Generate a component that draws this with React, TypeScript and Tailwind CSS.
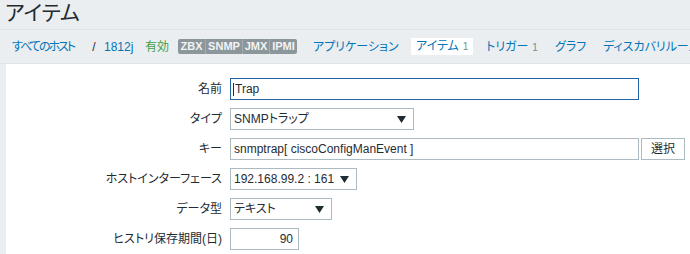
import React from 'react';

const font = "[font-family:'Liberation_Sans','Noto_Sans_CJK_JP',sans-serif] [font-feature-settings:'palt']";

const Arrow = () => (
  <svg width="9" height="7" viewBox="0 0 9 7" className="shrink-0">
    <path d="M0 0h9L4.5 7z" fill="#1f2c33" />
  </svg>
);

const Select = ({ value, width }: { value: string; width: string }) => (
  <div className={`${width} h-[22px] border border-[#acbbc2] bg-white flex items-center justify-between pl-[3px] pr-[7px] text-[#1f2c33]`}>
    <span>{value}</span>
    <Arrow />
  </div>
);

const App = () => {
  return (
    <div className={`w-[690px] h-[254px] overflow-hidden bg-[#ebeef0] text-[12px] ${font}`}>
      {/* Header */}
      <div className="h-[30px] border-b border-[#dfe4e7] pl-[5px] text-[21px] leading-[25px] text-[#1f2c33]">
        アイテム
      </div>

      {/* Breadcrumbs and tabs */}
      <div className="h-[34px] border-b border-[#dfe4e7] flex items-center pl-[12px] whitespace-nowrap text-[#0275b8]">
        <span className="w-[74px] shrink-0 tracking-[-2px]">すべてのホスト</span>
        <span className="w-[16px] shrink-0 text-center text-[#1f2c33]">/</span>
        <span className="w-[41px] shrink-0 ml-[2px]">1812j</span>
        <span className="w-[33px] shrink-0 text-[#429e47]">有効</span>
        <div className="flex h-[15px] rounded-[2px] overflow-hidden text-[11px] font-bold text-[#f2f4f5] leading-[15px] shrink-0">
          <span className="w-[27px] text-center bg-[#8c979c]">ZBX</span>
          <span className="w-[37px] text-center bg-[#8c979c] border-l border-[#a2abaf]">SNMP</span>
          <span className="w-[27px] text-center bg-[#8c979c] border-l border-[#a2abaf]">JMX</span>
          <span className="w-[28px] text-center bg-[#8c979c] border-l border-[#a2abaf]">IPMI</span>
        </div>
        <span className="w-[98px] shrink-0 ml-[16px]">アプリケーション</span>
        <span className="w-[62px] h-[17px] shrink-0 bg-white pl-[5px] leading-[17px]">
          アイテム<span className="ml-[4px] text-[10px] text-[#768d99]">1</span>
        </span>
        <span className="w-[69px] shrink-0 ml-[13px]">
          トリガー<span className="ml-[4px] text-[10px] text-[#768d99]">1</span>
        </span>
        <span className="w-[48px] shrink-0">グラフ</span>
        <span className="shrink-0">ディスカバリルール</span>
      </div>

      {/* Form panel */}
      <div className="ml-[6px] h-full bg-white pt-[14px] text-[#1f2c33]">
        <div className="grid grid-cols-[216px_1fr] gap-x-[8px] gap-y-[8px] items-center">
          <label className="text-right">名前</label>
          <div className="w-[409px] h-[22px] border border-[#1f65a6] flex items-center pl-[2px]">
            <span className="w-px h-[13px] bg-[#1f2c33] mr-[1px]" />
            <span>Trap</span>
          </div>

          <label className="text-right">タイプ</label>
          <Select value="SNMPトラップ" width="w-[184px]" />

          <label className="text-right">キー</label>
          <div className="flex gap-[2px]">
            <div className="w-[409px] h-[22px] border border-[#acbbc2] flex items-center pl-[3px]">
              snmptrap[ ciscoConfigManEvent ]
            </div>
            <button className="w-[44px] h-[22px] border border-[#acbbc2] bg-white text-[#1f2c33]">選択</button>
          </div>

          <label className="text-right">ホストインターフェース</label>
          <Select value="192.168.99.2 : 161" width="w-[127px]" />

          <label className="text-right">データ型</label>
          <Select value="テキスト" width="w-[102px]" />

          <label className="text-right">ヒストリ保存期間(日)</label>
          <div className="w-[69px] h-[22px] border border-[#acbbc2] flex items-center justify-end pr-[5px]">
            90
          </div>
        </div>
      </div>
    </div>
  );
};

export default App;
